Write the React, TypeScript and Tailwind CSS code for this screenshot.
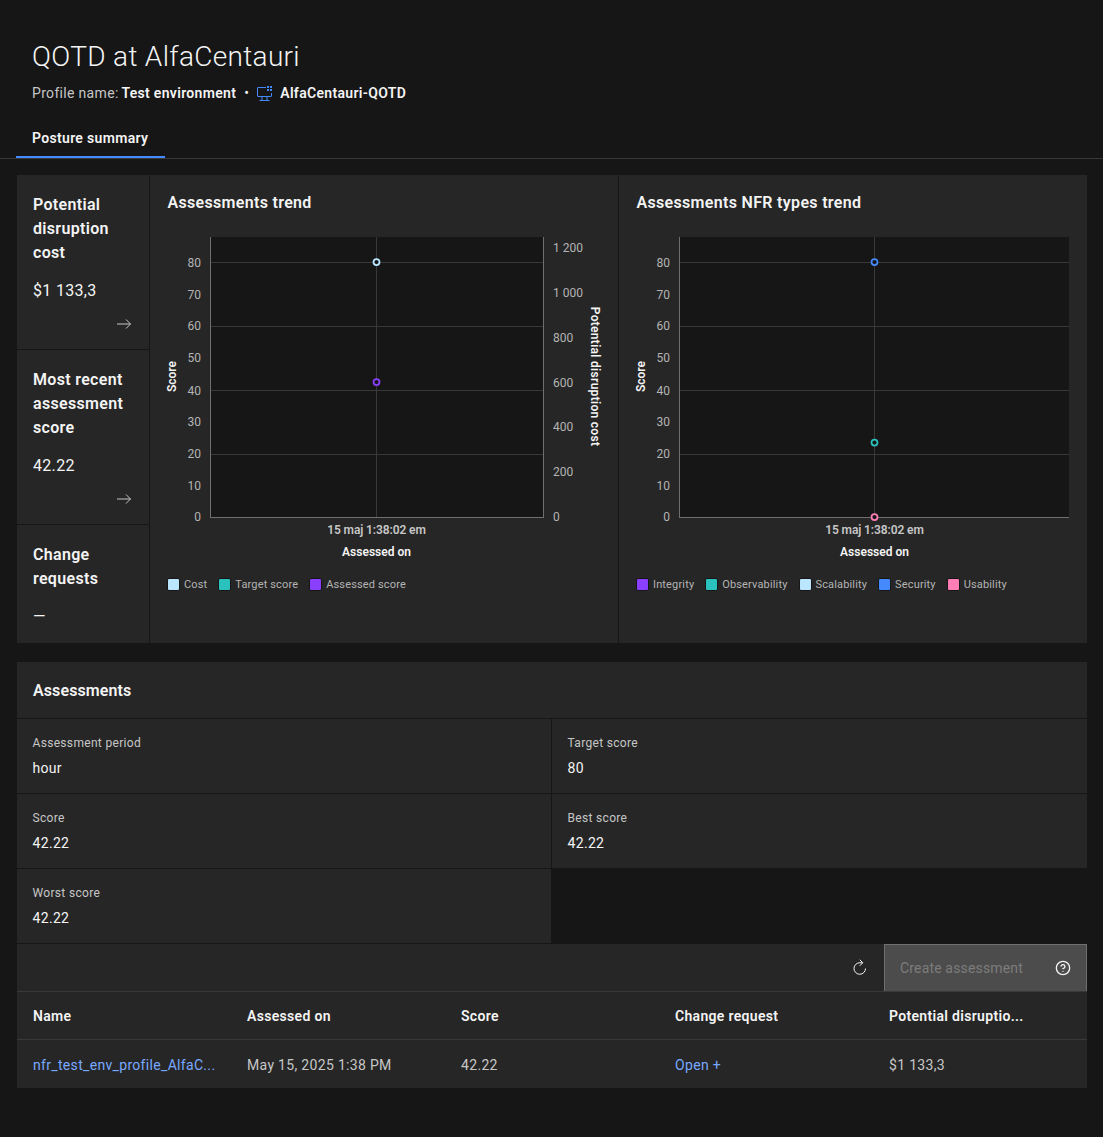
import React from 'react';
import { CircleHelp } from 'lucide-react';

const FONT = "'Roboto', 'Liberation Sans', sans-serif";

type Point = { y: number; color: string };
type LegendItem = { label: string; color: string };

const SCORE_TICKS = [
  { label: '80', y: 262 },
  { label: '70', y: 294 },
  { label: '60', y: 325 },
  { label: '50', y: 357 },
  { label: '40', y: 390 },
  { label: '30', y: 421 },
  { label: '20', y: 453 },
  { label: '10', y: 485 },
  { label: '0', y: 516 },
];

const COST_TICKS = [
  { label: '1 200', y: 247 },
  { label: '1 000', y: 292 },
  { label: '800', y: 337 },
  { label: '600', y: 382 },
  { label: '400', y: 426 },
  { label: '200', y: 471 },
  { label: '0', y: 516 },
];

const TREND_LEGEND: LegendItem[] = [
  { label: 'Cost', color: '#bae6ff' },
  { label: 'Target score', color: '#2bc1bd' },
  { label: 'Assessed score', color: '#8a3ffc' },
];

const NFR_LEGEND: LegendItem[] = [
  { label: 'Integrity', color: '#8a3ffc' },
  { label: 'Observability', color: '#2bc1bd' },
  { label: 'Scalability', color: '#bae6ff' },
  { label: 'Security', color: '#4589ff' },
  { label: 'Usability', color: '#ff7eb6' },
];

const SUMMARY = [
  { title: ['Potential', 'disruption', 'cost'], value: '$1 133,3', arrow: true, h: 'h-[174px]' },
  { title: ['Most recent', 'assessment', 'score'], value: '42.22', arrow: true, h: 'h-[174px]' },
  { title: ['Change', 'requests'], value: '—', arrow: false, h: 'flex-1' },
];

const COLUMNS = ['Name', 'Assessed on', 'Score', 'Change request', 'Potential disruptio...'];

// y values below are page pixels, toY moves them into the svg
const Chart: React.FC<{
  plotLeft: number;
  plotRight: number;
  offsetX: number;
  points: Point[];
  rightAxis?: boolean;
}> = ({ plotLeft, plotRight, offsetX, points, rightAxis }) => {
  const x0 = plotLeft - offsetX;
  const x1 = plotRight - offsetX;
  const mid = Math.ceil((plotLeft + plotRight) / 2 - offsetX) - 0.5;
  const toY = (y: number) => y - 227;

  return (
    <svg width={468} height={340} className="block tracking-normal" style={{ fontFamily: FONT }}>
      <rect x={x0} y={toY(237)} width={x1 - x0} height={280} fill="#161616" />
      {[262, 326, 390, 454].map((y) => (
        <line key={y} x1={x0} x2={x1} y1={toY(y) + 0.5} y2={toY(y) + 0.5} stroke="#393939" />
      ))}
      <line x1={mid} x2={mid} y1={toY(237)} y2={toY(517)} stroke="#393939" />
      <line x1={x0 - 0.5} x2={x0 - 0.5} y1={toY(237)} y2={toY(518)} stroke="#6f6f6f" />
      <line x1={x0} x2={x1} y1={toY(517) + 0.5} y2={toY(517) + 0.5} stroke="#6f6f6f" />
      {rightAxis && <line x1={x1 + 0.5} x2={x1 + 0.5} y1={toY(237)} y2={toY(518)} stroke="#6f6f6f" />}

      {SCORE_TICKS.map((t) => (
        <text key={t.label} x={x0 - 10} y={toY(t.y) + 5} textAnchor="end" fontSize={12} fill="#b4b4b4">
          {t.label}
        </text>
      ))}
      {rightAxis &&
        COST_TICKS.map((t) => (
          <text key={t.label} x={x1 + 10} y={toY(t.y) + 5} fontSize={12} fill="#b4b4b4">
            {t.label}
          </text>
        ))}

      <text
        transform={`translate(${x0 - 35} ${toY(376.5)}) rotate(-90)`}
        textAnchor="middle"
        fontSize={12}
        fontWeight={600}
        fill="#f4f4f4"
      >
        Score
      </text>
      {rightAxis && (
        <text
          transform={`translate(${x1 + 48} ${toY(376.5)}) rotate(90)`}
          textAnchor="middle"
          fontSize={12}
          fontWeight={600}
          fill="#f4f4f4"
          className="tracking-[0.3px]"
        >
          Potential disruption cost
        </text>
      )}

      <text
        x={mid}
        y={toY(534)}
        textAnchor="middle"
        fontSize={12}
        fontWeight={600}
        fill="#c6c6c6"
        className="tracking-[-0.1px]"
      >
        15 maj 1:38:02 em
      </text>
      <text x={mid} y={toY(556)} textAnchor="middle" fontSize={12} fontWeight={600} fill="#f4f4f4">
        Assessed on
      </text>

      {points.map((p, i) => (
        <circle key={i} cx={mid} cy={toY(p.y)} r={3} fill="#161616" stroke={p.color} strokeWidth={1.75} />
      ))}
    </svg>
  );
};

const Legend: React.FC<{ items: LegendItem[] }> = ({ items }) => (
  <div className="flex items-center gap-[11px] mt-[9px] h-[16px] tracking-[0.15px]">
    {items.map((item) => (
      <div key={item.label} className="flex items-center gap-[4px]">
        <span
          className="w-[13px] h-[13px] border border-[#161616] rounded-[2px]"
          style={{ backgroundColor: item.color }}
        />
        <span className="text-[11px] text-[#b4b4b4] leading-none">{item.label}</span>
      </div>
    ))}
  </div>
);

const ChartPanel: React.FC<{ title: string; children: React.ReactNode }> = ({ title, children }) => (
  <div className="bg-[#262626] flex-1 min-w-0">
    <h3 className="pl-[17.5px] pt-[18px] h-[52px] text-[16px] leading-[20px] font-semibold text-[#f4f4f4]">{title}</h3>
    {children}
  </div>
);

const Field: React.FC<{ label: string; value: string }> = ({ label, value }) => (
  <div className="bg-[#262626] h-[74px] pl-[15.5px] pt-[16px]">
    <div className="text-[12px] leading-[16px] text-[#c6c6c6]">{label}</div>
    <div className="text-[14px] leading-[18px] mt-[8px] text-[#f4f4f4]">{value}</div>
  </div>
);

const App: React.FC = () => {
  return (
    <div className="min-h-[1137px] bg-[#161616] text-[#f4f4f4] tracking-[0.32px]" style={{ fontFamily: FONT }}>
      <header className="pt-[39px]">
        <h1 className="pl-[32px] text-[28px] leading-[36px] font-light text-[#f4f4f4]">QOTD at AlfaCentauri</h1>
        <div className="pl-[32px] mt-[9px] flex items-center h-[18px] text-[14px] text-[#c6c6c6]">
          <span>Profile name:&nbsp;</span>
          <span className="-ml-px font-semibold text-[#f4f4f4]">Test environment</span>
          <span className="ml-[8px] mr-[7px] text-[#f4f4f4]">•</span>
          <svg width="15" height="15" viewBox="0 0 15 15" fill="none" stroke="#4589ff" className="ml-[1px] mr-[8px]">
            <path d="M9 1.5H1a.5.5 0 0 0-.5.5v8a.5.5 0 0 0 .5.5h13a.5.5 0 0 0 .5-.5V7" />
            <path d="M5 11v3M10 11v3M2.5 14.5h10" />
            <rect x="10" y="0" width="2" height="2" fill="#4589ff" stroke="none" />
            <rect x="13" y="0" width="2" height="2" fill="#4589ff" stroke="none" />
            <rect x="10" y="3" width="2" height="2" fill="#4589ff" stroke="none" />
            <rect x="13" y="3" width="2" height="2" fill="#4589ff" stroke="none" />
          </svg>
          <span className="font-semibold text-[#f4f4f4]">AlfaCentauri-QOTD</span>
        </div>
        <div className="mt-[18px] border-b border-[#393939] h-[39px] flex items-end pl-[16px]">
          <div className="w-[149px] h-[39px] border-b-2 border-[#4589ff] pl-[16px] pt-[10px] text-[14px] leading-[18px] font-semibold text-[#f4f4f4]">
            Posture summary
          </div>
        </div>
      </header>

      <main className="mx-[17px] w-[1070px] pt-[16px]">
        <section className="flex h-[468px] gap-px">
          <div className="w-[132px] flex flex-col gap-px shrink-0">
            {SUMMARY.map((card) => (
              <div key={card.value} className={`bg-[#262626] pl-[16px] pt-[18px] relative ${card.h}`}>
                <div className="text-[16px] leading-[24px] font-semibold text-[#f4f4f4]">
                  {card.title.map((line) => (
                    <div key={line}>{line}</div>
                  ))}
                </div>
                <div className="mt-[15px] text-[16px] leading-[22px] text-[#f4f4f4]">{card.value}</div>
                {card.arrow && (
                  <svg
                    width="14"
                    height="10"
                    viewBox="0 0 14 10"
                    fill="none"
                    stroke="#c6c6c6"
                    className="absolute right-[18px] bottom-[20px]"
                  >
                    <path d="M0 5h13.5M9 .5 13.5 5 9 9.5" />
                  </svg>
                )}
              </div>
            ))}
          </div>
          <ChartPanel title="Assessments trend">
            <Chart
              plotLeft={211}
              plotRight={543}
              offsetX={150}
              rightAxis
              points={[
                { y: 262, color: '#bae6ff' },
                { y: 382, color: '#8a3ffc' },
              ]}
            />
            <div className="pl-[17px]">
              <Legend items={TREND_LEGEND} />
            </div>
          </ChartPanel>
          <ChartPanel title="Assessments NFR types trend">
            <Chart
              plotLeft={680}
              plotRight={1069}
              offsetX={619}
              points={[
                { y: 262, color: '#4589ff' },
                { y: 442.5, color: '#2bc1bd' },
                { y: 517, color: '#ff7eb6' },
              ]}
            />
            <div className="pl-[17px]">
              <Legend items={NFR_LEGEND} />
            </div>
          </ChartPanel>
        </section>

        <section className="mt-[19px]">
          <div className="bg-[#262626] h-[56px] pl-[16px] pt-[19px] text-[16px] leading-[20px] font-semibold text-[#f4f4f4] tracking-[0.1px]">
            Assessments
          </div>
          <div className="grid grid-cols-[534px_535px] gap-px pt-px">
            <Field label="Assessment period" value="hour" />
            <Field label="Target score" value="80" />
            <Field label="Score" value="42.22" />
            <Field label="Best score" value="42.22" />
            <Field label="Worst score" value="42.22" />
          </div>
          <div className="mt-px bg-[#262626] h-[47px] flex items-center justify-end">
            <svg width="14" height="16" viewBox="0 0 14 16" fill="none" stroke="#f4f4f4" className="mr-[17px] mb-[1px]">
              <path d="M12.5 9.5A5.75 5.75 0 1 1 6.75 3.75H9.5" />
              <path d="M6.75.75l3 3-3 3" />
            </svg>
            <div className="w-[203px] h-[47px] flex items-center justify-between pl-[15px] pr-[15px] bg-[#4c4c4c] border border-[#6f6f6f] border-b-0 text-[14px] text-[#7c7c7c] tracking-[0.16px]">
              <span>Create assessment</span>
              <CircleHelp size={16} strokeWidth={2} className="text-[#f4f4f4]" />
            </div>
          </div>
          <div className="grid grid-cols-5 border-t border-[#393939] bg-[#262626] h-[48px] items-center pt-[2px]">
            {COLUMNS.map((c) => (
              <div key={c} className="pl-[16px] text-[14px] font-semibold text-[#f4f4f4]">
                {c}
              </div>
            ))}
          </div>
          <div className="grid grid-cols-5 border-t border-[#393939] bg-[#262626] h-[49px] items-center pt-[2px] text-[14px] text-[#c6c6c6]">
            <div className="pl-[16px] text-[#78a9ff]">nfr_test_env_profile_AlfaC...</div>
            <div className="pl-[16px]">May 15, 2025 1:38 PM</div>
            <div className="pl-[16px]">42.22</div>
            <div className="pl-[16px] text-[#78a9ff]">Open +</div>
            <div className="pl-[16px]">$1 133,3</div>
          </div>
        </section>
      </main>
    </div>
  );
};

export default App;
